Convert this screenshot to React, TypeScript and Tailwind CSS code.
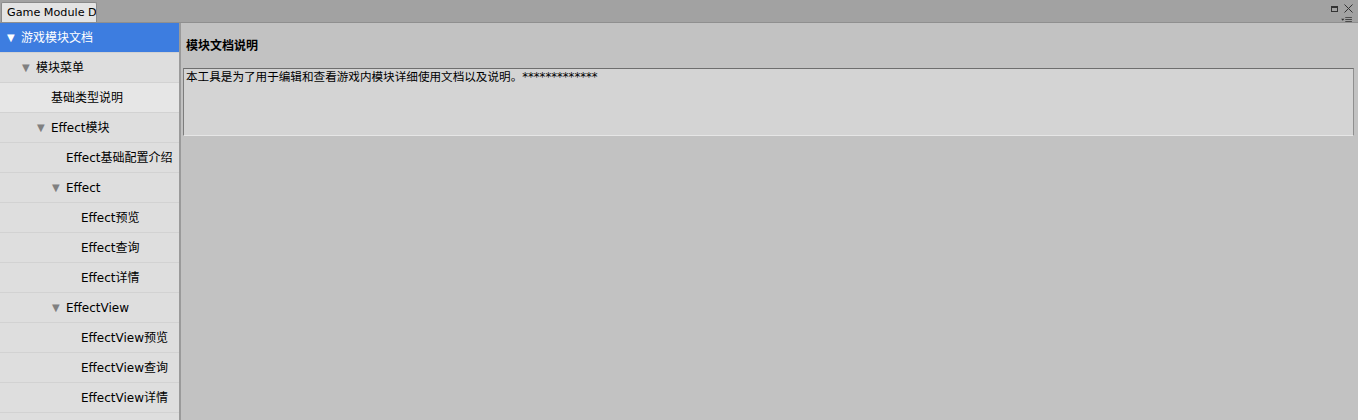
import React from 'react';

type Item = { label: string; level: number; expanded?: boolean; selected?: boolean; hover?: boolean };

const items: Item[] = [
  { label: '游戏模块文档', level: 0, expanded: true, selected: true },
  { label: '模块菜单', level: 1, expanded: true },
  { label: '基础类型说明', level: 2, hover: true },
  { label: 'Effect模块', level: 2, expanded: true },
  { label: 'Effect基础配置介绍', level: 3 },
  { label: 'Effect', level: 3, expanded: true },
  { label: 'Effect预览', level: 4 },
  { label: 'Effect查询', level: 4 },
  { label: 'Effect详情', level: 4 },
  { label: 'EffectView', level: 3, expanded: true },
  { label: 'EffectView预览', level: 4 },
  { label: 'EffectView查询', level: 4 },
  { label: 'EffectView详情', level: 4 },
];

const indent = ['pl-[7px]', 'pl-[22px]', 'pl-[37px]', 'pl-[52px]', 'pl-[67px]'];

const TreeRow: React.FC<{ item: Item }> = ({ item }) => {
  const bg = item.selected ? 'bg-[#3d7de0] text-white' : item.hover ? 'bg-[#e6e6e6] text-black' : 'bg-[#dedede] text-black';
  return (
    <div className={`h-[30px] flex items-center border-b border-[#d2d2d2] ${bg} ${indent[item.level]}`}>
      <span className={`w-[14px] text-[10px] ${item.selected ? 'text-white' : 'text-[#808080]'}`}>
        {item.expanded ? '▼' : ''}
      </span>
      <span className="whitespace-nowrap">{item.label}</span>
    </div>
  );
};

export default function App() {
  return (
    <div
      className="w-[1358px] h-[420px] flex flex-col bg-[#c2c2c2] text-[12px] overflow-hidden"
      style={{ fontFamily: '"DejaVu Sans", "Noto Sans CJK SC", sans-serif' }}
    >
      {/* title bar */}
      <div className="h-[23px] bg-[#a2a2a2] flex items-end justify-between border-b border-[#8f8f8f]">
        <div className="ml-[1px] h-[20px] w-[96px] bg-[#e4e4e4] border border-b-0 border-[#8a8a8a] rounded-t-[2px] overflow-hidden pl-[5px] pt-[2px] whitespace-nowrap text-black text-[11.2px] leading-[15px]">
          Game Module D
        </div>
        <div className="self-stretch flex flex-col items-end pr-[5px] pt-[4px]">
          <div className="flex items-center gap-[6px]">
            <div className="w-[7px] h-[6px] border border-[#333] border-t-[2px]" />
            <svg width="9" height="9" viewBox="0 0 9 9">
              <path d="M0.5 0.5 L8.5 8.5 M8.5 0.5 L0.5 8.5" stroke="#333" strokeWidth="1" />
            </svg>
          </div>
          <svg width="13" height="6" viewBox="0 0 13 6" className="mt-[4px]">
            <path d="M0 2 L4 2 L2 4.5 Z" fill="#333" />
            <path d="M5 0.5 H13 M5 3 H13 M5 5.5 H13" stroke="#333" strokeWidth="1" />
          </svg>
        </div>
      </div>

      <div className="flex flex-1 min-h-0">
        {/* tree */}
        <div className="w-[181px] bg-[#dedede] border-r-2 border-[#9a9a9a] shrink-0">
          {items.map((it) => (
            <TreeRow key={it.label} item={it} />
          ))}
        </div>

        {/* content */}
        <div className="flex-1 flex flex-col pl-[2px] pr-[4px]">
          <div className="h-[45px] flex items-center pl-[3px] font-bold text-black">模块文档说明</div>
          <div className="h-[68px] bg-[#d4d4d4] border border-[#7d7d7d] border-t-[#6e6e6e] border-r-[#909090] border-b-[#e6e6e6] px-[2px] pt-[1px] text-black leading-[14px] text-[11.6px]">
            本工具是为了用于编辑和查看游戏内模块详细使用文档以及说明。*************
          </div>
        </div>
      </div>
    </div>
  );
}
